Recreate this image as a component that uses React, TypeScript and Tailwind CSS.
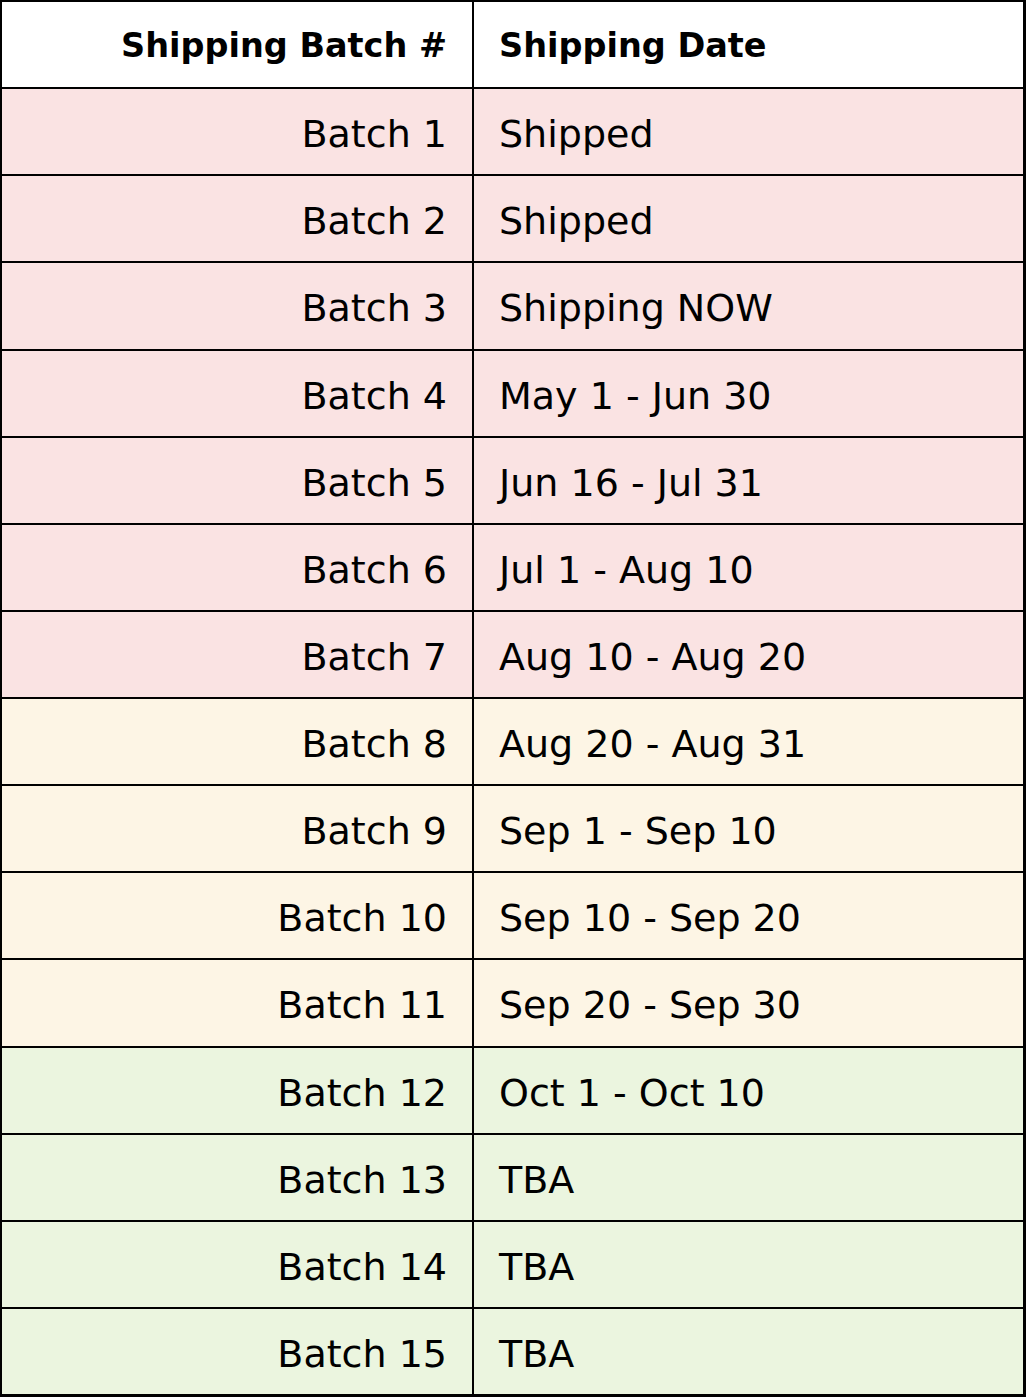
import { Fragment } from 'react'

const rows: { batch: string; date: string; tone: 'pink' | 'cream' | 'green' }[] = [
  { batch: 'Batch 1', date: 'Shipped', tone: 'pink' },
  { batch: 'Batch 2', date: 'Shipped', tone: 'pink' },
  { batch: 'Batch 3', date: 'Shipping NOW', tone: 'pink' },
  { batch: 'Batch 4', date: 'May 1 - Jun 30', tone: 'pink' },
  { batch: 'Batch 5', date: 'Jun 16 - Jul 31', tone: 'pink' },
  { batch: 'Batch 6', date: 'Jul 1 - Aug 10', tone: 'pink' },
  { batch: 'Batch 7', date: 'Aug 10 - Aug 20', tone: 'pink' },
  { batch: 'Batch 8', date: 'Aug 20 - Aug 31', tone: 'cream' },
  { batch: 'Batch 9', date: 'Sep 1 - Sep 10', tone: 'cream' },
  { batch: 'Batch 10', date: 'Sep 10 - Sep 20', tone: 'cream' },
  { batch: 'Batch 11', date: 'Sep 20 - Sep 30', tone: 'cream' },
  { batch: 'Batch 12', date: 'Oct 1 - Oct 10', tone: 'green' },
  { batch: 'Batch 13', date: 'TBA', tone: 'green' },
  { batch: 'Batch 14', date: 'TBA', tone: 'green' },
  { batch: 'Batch 15', date: 'TBA', tone: 'green' },
]

const toneClass = {
  pink: 'bg-[#fae3e3]',
  cream: 'bg-[#fdf5e5]',
  green: 'bg-[#ebf5df]',
}

export default function App() {
  return (
    <div
      className="grid h-[1397px] w-[1026px] grid-cols-[470px_1fr] grid-rows-[repeat(16,1fr)] gap-[2px] bg-black pt-[2px] pr-[3px] pb-[3px] pl-[2px] text-black"
      style={{ fontFamily: '"DejaVu Sans", sans-serif' }}
    >
      <div className="flex items-center justify-end bg-white pt-[4px] pr-[25px] text-[33.5px] font-bold">
        Shipping Batch #
      </div>
      <div className="flex items-center bg-white pt-[4px] pl-[25px] text-[33.5px] font-bold">
        Shipping Date
      </div>
      {rows.map((r) => (
        <Fragment key={r.batch}>
          <div className={`flex items-center justify-end pt-[6px] pr-[25px] text-[38px] ${toneClass[r.tone]}`}>
            {r.batch}
          </div>
          <div className={`flex items-center pt-[6px] pl-[25px] text-[38px] ${toneClass[r.tone]}`}>
            {r.date}
          </div>
        </Fragment>
      ))}
    </div>
  )
}
